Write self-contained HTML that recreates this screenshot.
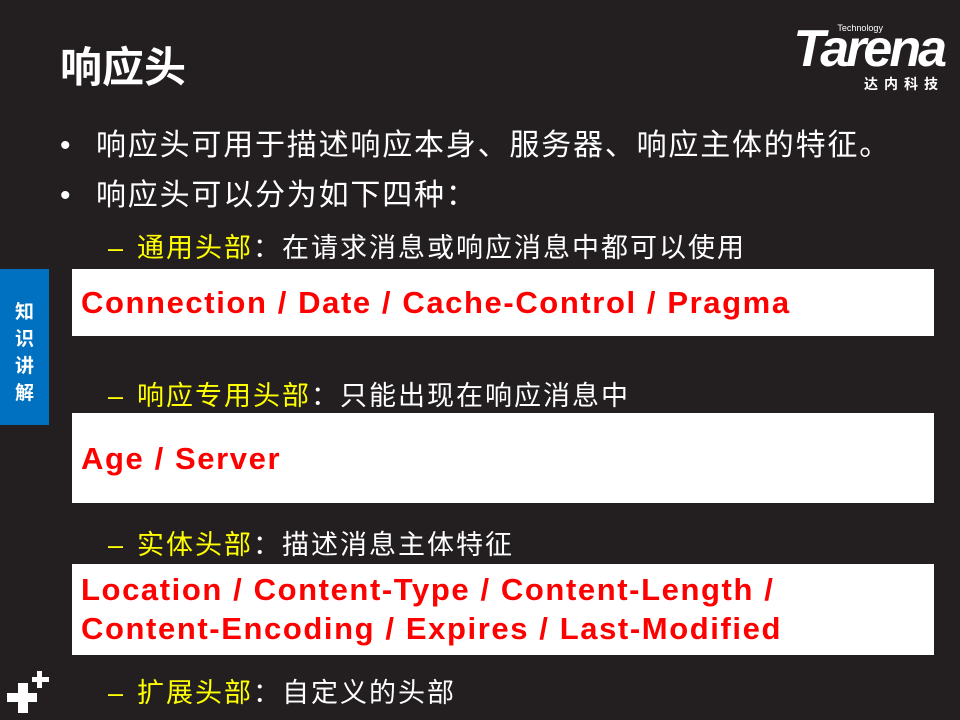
<!DOCTYPE html>
<html><head><meta charset="utf-8"><style>
body{margin:0;width:960px;height:720px;background:#231f20;position:relative;overflow:hidden;font-family:"Liberation Sans","Noto Sans CJK SC",sans-serif;color:#fff}
.a{position:absolute;white-space:nowrap}
.t{left:60px;top:34px;font-size:42px;font-weight:bold}
.b{left:60px;font-size:30px;letter-spacing:1.8px}
.b span{display:inline-block;width:36px}
.s{left:108px;font-size:27px;letter-spacing:2px}
.s i{font-style:normal;display:inline-block;width:29px;letter-spacing:0}
.y{color:#ffff00}
.box{position:absolute;left:72px;width:862px;background:#fff;color:#ff0000;font-weight:bold;font-size:31px;letter-spacing:1.6px;box-sizing:border-box;padding-left:9px;line-height:39px}
.tab{position:absolute;left:0;top:269px;width:49px;height:156px;background:#0070c0;font-size:19px;font-weight:bold;text-align:center;line-height:27px;padding-top:30px;box-sizing:border-box}
</style></head><body>
<div class="a t">响应头</div>
<div class="a" style="right:16px;top:20px;text-align:right">
<div style="font-size:9px;position:absolute;left:44px;top:3px">Technology</div>
<div style="font:italic bold 52px 'Liberation Sans',sans-serif;letter-spacing:-3px;line-height:50px;margin-top:4px">Tarena</div>
<div style="font-size:14px;font-weight:bold;letter-spacing:6px">达内科技</div>
</div>
<div class="a b" style="top:120px"><span>•</span>响应头可用于描述响应本身、服务器、响应主体的特征。</div>
<div class="a b" style="top:170px"><span>•</span>响应头可以分为如下四种：</div>
<div class="a s" style="top:226px"><span class="y"><i>–</i>通用头部</span>：在请求消息或响应消息中都可以使用</div>
<div class="box" style="top:269px;height:67px;padding-top:14px">Connection / Date / Cache-Control / Pragma</div>
<div class="tab">知<br>识<br>讲<br>解</div>
<div class="a s" style="top:374px"><span class="y"><i>–</i>响应专用头部</span>：只能出现在响应消息中</div>
<div class="box" style="top:413px;height:90px;padding-top:26px">Age / Server</div>
<div class="a s" style="top:523px"><span class="y"><i>–</i>实体头部</span>：描述消息主体特征</div>
<div class="box" style="top:564px;height:91px;padding-top:6px">Location / Content-Type / Content-Length /<br>Content-Encoding / Expires / Last-Modified</div>
<div class="a s" style="top:671px"><span class="y"><i>–</i>扩展头部</span>：自定义的头部</div>
<svg class="a" style="left:0;top:660px" width="60" height="60"><g fill="#fff"><rect x="18" y="23" width="10" height="30"/><rect x="7" y="33" width="30" height="9"/><rect x="37" y="11" width="5" height="17"/><rect x="32" y="17" width="17" height="5"/></g></svg>
</body></html>
